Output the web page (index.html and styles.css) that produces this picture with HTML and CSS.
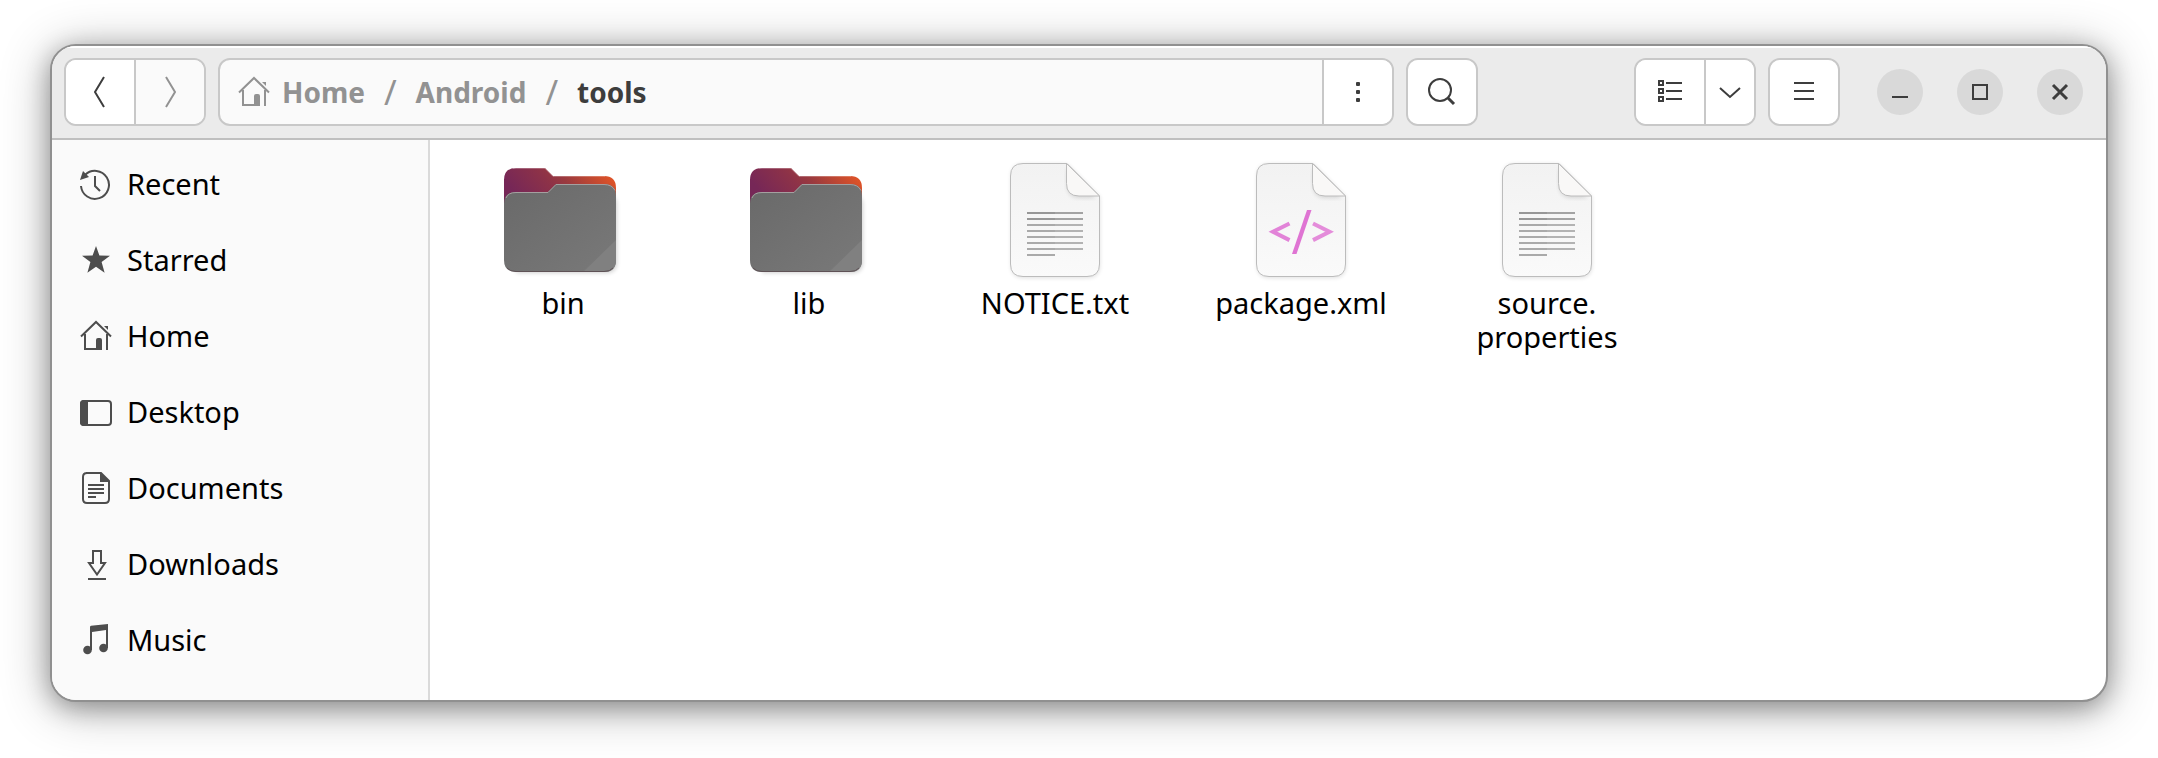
FILE: index.html
```html
<!DOCTYPE html>
<html lang="en">
<head>
<meta charset="utf-8">
<title>tools</title>
<link rel="stylesheet" href="styles.css">
</head>
<body>
<svg class="defs" width="0" height="0" aria-hidden="true">
  <defs>
    <linearGradient id="folder-back" x1="0" y1="0.3" x2="1" y2="0">
      <stop offset="0" stop-color="#762757"/>
      <stop offset="0.35" stop-color="#8d3248"/>
      <stop offset="0.5" stop-color="#9a3a3f"/>
      <stop offset="1" stop-color="#f05a22"/>
    </linearGradient>
    <linearGradient id="folder-front" x1="0" y1="0" x2="1" y2="1">
      <stop offset="0" stop-color="#696969"/>
      <stop offset="1" stop-color="#797979"/>
    </linearGradient>
    <linearGradient id="paper" x1="0" y1="0" x2="0" y2="1">
      <stop offset="0" stop-color="#f2f2f2"/>
      <stop offset="1" stop-color="#fafafa"/>
    </linearGradient>
    <filter id="soft" x="-10%" y="-10%" width="120%" height="120%">
      <feGaussianBlur stdDeviation="2"/>
    </filter>
    <symbol id="home" viewBox="0 0 32 32">
      <path d="M1 16.5 16 2l15 14.5M5 14v15h12M27 14v16" fill="none" stroke="currentColor" stroke-width="2"/>
      <path d="M16 30V20q0-2 2-2h2q2 0 2 2v10zM24 6h4v4z" fill="currentColor"/>
    </symbol>
    <symbol id="folder" viewBox="0 0 128 128">
      <path d="M17 36h90q11 0 11 12v56q0 11-11 11H17z" fill="#000" opacity="0.18" filter="url(#soft)"/>
      <path d="M5 50V22Q5 10 17 10h29l8 8h51q12 0 12 12v20z" fill="url(#folder-back)"/>
      <path d="M5 46q0-12 12-12h32l8-8h48q12 0 12 12v64q0 12-12 12H17Q5 114 5 102z" fill="url(#folder-front)"/>
      <path d="M84 114 117 82v20q0 12-12 12z" fill="#808080"/>
      <path d="M7 40q2-5.500 10-5.500h32l8-8h48q8 0 11 6" fill="none" stroke="#a4a0a0"/>
      <path d="M14 10.500h32l8 8h52" fill="none" stroke="#fff" opacity="0.250"/>
      <path d="M8 110q3 3.500 9 3.500h88q6 0 9-3.500" fill="none" stroke="#5f5256"/>
    </symbol>
    <symbol id="sheet" viewBox="0 0 128 128">
      <path d="M17 19Q17 6 29 6h44l33 33v68q0 13-13 13H30q-13 0-13-13z" fill="#000" opacity="0.12" filter="url(#soft)"/>
      <path d="M16.500 18q0-12.500 12.500-12.500h44l32.500 32.500v68q0 12.500-12.500 12.500H29q-12.500 0-12.500-12.500z" fill="url(#paper)" stroke="#bcbcbc"/>
      <path d="M73 10v16q0 14 13 14h16z" fill="#000" opacity="0.120" filter="url(#soft)"/>
      <path d="M72.500 5.500v20q0 12.500 12.500 12.500h20.500z" fill="#f9f8f7" stroke="#bcbcbc"/>
    </symbol>
    <symbol id="text-file" viewBox="-3 0 128 128">
      <use href="#sheet" width="128" height="128"/>
      <path d="M33 55h28M33 61h28" stroke="#979797" stroke-width="2"/>
      <path d="M61 55h28M61 61h28" stroke="#a3a3a3" stroke-width="2"/>
      <path d="M33 67h28M33 73h28M33 79h28M33 85h28M33 91h28M33 97h28" stroke="#aaa" stroke-width="2"/>
      <path d="M61 67h28M61 73h28M61 79h28M61 85h28M61 91h28" stroke="#b3b3b3" stroke-width="2"/>
    </symbol>
  </defs>
</svg>

<main class="window">
  <header class="headerbar">
    <div class="group">
      <button class="tool" type="button" aria-label="Back"><svg class="icon" viewBox="0 0 32 32"><path class="line" d="M20 1 11 16l9 15"/></svg></button>
      <button class="tool tool--disabled" type="button" aria-label="Forward" disabled><svg class="icon" viewBox="0 0 32 32"><path class="line" d="m12 1 9 15-9 15"/></svg></button>
    </div>
    <div class="group group--path">
      <nav class="path" aria-label="Location">
        <a class="crumb" href="#home"><svg class="icon"><use href="#home"/></svg>Home</a>
        <span class="slash">/</span>
        <a class="crumb" href="#android">Android</a>
        <span class="slash">/</span>
        <a class="crumb crumb--current" href="#tools" aria-current="page">tools</a>
      </nav>
      <button class="tool" type="button" aria-label="Folder menu"><svg class="icon" viewBox="0 0 32 32"><path d="M14 7q0-1 1-1h2q1 0 1 1v2q0 1-1 1h-2q-1 0-1-1zm0 8q0-1 1-1h2q1 0 1 1v2q0 1-1 1h-2q-1 0-1-1zm0 8q0-1 1-1h2q1 0 1 1v2q0 1-1 1h-2q-1 0-1-1z" fill="currentColor"/></svg></button>
    </div>
    <div class="group group--search">
      <button class="tool" type="button" aria-label="Search"><svg class="icon" viewBox="0 0 32 32"><circle class="line" cx="14" cy="14" r="11"/><path class="line line--bold" d="m22 22 6 6"/></svg></button>
    </div>
    <div class="group">
      <button class="tool" type="button" aria-label="List view"><svg class="icon" viewBox="0 0 32 32"><path class="line" d="M5 5h4v4H5zM5 13h4v4H5zM5 21h4v4H5zM12 7h16M12 15h16M12 23h16"/></svg></button>
      <button class="tool tool--narrow" type="button" aria-label="View options"><svg class="icon" viewBox="0 0 32 32"><path class="line" d="m6 12 10 9 10-9"/></svg></button>
    </div>
    <div class="group">
      <button class="tool" type="button" aria-label="Main menu"><svg class="icon" viewBox="0 0 32 32"><path class="line" d="M6 7h20M6 15h20M6 23h20"/></svg></button>
    </div>
    <div class="controls">
      <button class="control" type="button" aria-label="Minimize"><svg class="icon" viewBox="0 0 32 32"><path class="line" d="M8 21h16"/></svg></button>
      <button class="control" type="button" aria-label="Maximize"><svg class="icon" viewBox="0 0 32 32"><path class="line" d="M9 9h14v14H9z"/></svg></button>
      <button class="control" type="button" aria-label="Close"><svg class="icon" viewBox="0 0 32 32"><path class="line line--bold" d="m9 9 14 14M23 9 9 23"/></svg></button>
    </div>
  </header>

  <div class="body">
    <nav class="sidebar" aria-label="Places">
      <a class="place" href="#recent"><svg class="icon" viewBox="0 0 32 32"><path class="line" d="M1 18A14 14 0 1 0 5 7"/><path d="m3 3-3 9 9-3z" fill="currentColor"/><path class="line" d="M15 8v10l5 5"/></svg>Recent</a>
      <a class="place" href="#starred"><svg class="icon" viewBox="0 0 32 32"><path d="m16 2 3.400 9.400 10.600.3-8.400 6.400 3 10.600-8.600-6-8.600 6 3-10.600L2 11.700l10.600-.3z" fill="currentColor"/></svg>Starred</a>
      <a class="place" href="#home"><svg class="icon"><use href="#home"/></svg>Home</a>
      <a class="place" href="#desktop"><svg class="icon" viewBox="0 0 32 32"><rect class="line" x="1" y="5" width="30" height="24" rx="3"/><path d="M8 4v26H4q-4 0-4-4V8q0-4 4-4z" fill="currentColor"/></svg>Desktop</a>
      <a class="place" href="#documents"><svg class="icon" viewBox="0 0 32 32"><path class="line" d="M6 1h15l8 8v18q0 4-4 4H7q-4 0-4-4V5q0-4 4-4M8 13h16M8 17h16M8 21h16M8 25h8"/><path d="M20 0v10h10z" fill="currentColor"/></svg>Documents</a>
      <a class="place" href="#downloads"><svg class="icon" viewBox="0 0 32 32"><path class="line" d="M13 3h8v12h4l-8 11.500L9 15h4zM8 31h18"/></svg>Downloads</a>
      <a class="place" href="#music"><svg class="icon" viewBox="0 0 32 32"><path d="M10 3q0-1 1-1.200L28 0v24h-2V6L12 8v18h-2z" fill="currentColor"/><circle cx="7.500" cy="26" r="4.300" fill="currentColor"/><circle cx="23.500" cy="24" r="4.300" fill="currentColor"/></svg>Music</a>
    </nav>
    <section class="files" aria-label="Files">
      <a class="file" href="#bin"><svg class="file-icon"><use href="#folder"/></svg><span class="file-name">bin</span></a>
      <a class="file" href="#lib"><svg class="file-icon"><use href="#folder"/></svg><span class="file-name">lib</span></a>
      <a class="file" href="#notice"><svg class="file-icon"><use href="#text-file"/></svg><span class="file-name">NOTICE.txt</span></a>
      <a class="file" href="#package"><svg class="file-icon" viewBox="-3 0 128 128"><use href="#sheet" width="128" height="128"/><path d="M49.500 65.500 33 73.800l16.500 8.300" fill="none" stroke="#e283d8" stroke-width="4"/><path d="m73 65.500 16.500 8.300L73 82.100" fill="none" stroke="#e48cda" stroke-width="4"/><path d="M67 52h4.500l-15 44H52z" fill="#df74d3"/></svg><span class="file-name">package.xml</span></a>
      <a class="file" href="#source"><svg class="file-icon"><use href="#text-file"/></svg><span class="file-name">source.<wbr>properties</span></a>
    </section>
  </div>
</main>
</body>
</html>
```
FILE: styles.css
```css
* {
  box-sizing: border-box;
}

body {
  display: flex;
  min-height: 100vh;
  margin: 0;
  padding: 44px 50px 56px;
  background: #fff;
  color: #000;
  font: 29px/34px "Noto Sans", sans-serif;
}

a {
  color: inherit;
  text-decoration: none;
}

button {
  margin: 0;
  padding: 0;
  border: 0;
  color: inherit;
  font: inherit;
}

.defs {
  position: absolute;
}

.window {
  display: flex;
  flex: 1;
  flex-direction: column;
  overflow: hidden;
  border: 2px solid #909090;
  border-radius: 26px;
  background: #fff;
  background-clip: padding-box;
  box-shadow: 0 6px 24px rgba(0, 0, 0, 0.3), 0 6px 50px rgba(0, 0, 0, 0.3);
}

.headerbar {
  display: flex;
  align-items: center;
  gap: 12px;
  padding: 12px 23px 12px 12px;
  border-bottom: 2px solid #bfbfbf;
  background: #ebebeb;
  box-shadow: inset 0 2px #fff;
  color: #3d3d3d;
}

.group {
  display: flex;
  flex: none;
  overflow: hidden;
  border: 2px solid #c8c8c8;
  border-radius: 12px;
  background: #fff;
}

.group--path {
  flex: 1;
  background: #fafafa;
}

.group--search {
  margin-right: 144px;
}

.tool {
  display: grid;
  place-items: center;
  width: 68px;
  height: 64px;
  background: #fff;
}

.tool + .tool,
.path + .tool {
  box-sizing: content-box;
  border-left: 2px solid #c8c8c8;
}

.tool--narrow {
  width: 48px;
}

.tool--disabled {
  background: #fafafa;
  color: #929292;
}

.path {
  display: flex;
  flex: 1;
  align-items: center;
  gap: 19px;
  padding-left: 18px;
  color: #929292;
}

.crumb {
  display: flex;
  align-items: center;
  gap: 12px;
  font-size: 28px;
  font-weight: 700;
}

.crumb--current {
  color: #3d3d3d;
}

.slash {
  font-size: 34px;
}

.icon {
  flex: none;
  width: 32px;
  height: 32px;
}

.line {
  fill: none;
  stroke: currentColor;
  stroke-width: 2;
}

.line--bold {
  stroke-width: 3;
}

.controls {
  display: flex;
  gap: 34px;
  margin-left: 25px;
}

.control {
  display: grid;
  place-items: center;
  width: 46px;
  height: 46px;
  border-radius: 50%;
  background: #d9d9d9;
}

.body {
  display: flex;
  flex: 1;
}

.sidebar {
  flex: none;
  width: 378px;
  padding: 6px 0;
  border-right: 2px solid #dadada;
  background: #fafafa;
}

.place {
  display: flex;
  align-items: center;
  gap: 15px;
  height: 76px;
  padding: 0 28px;
}

.place .icon {
  color: #4d4d4d;
}

.files {
  display: flex;
  flex: 1;
  flex-wrap: wrap;
  align-content: flex-start;
  padding: 18px 10px;
}

.file {
  display: flex;
  flex-direction: column;
  align-items: center;
  width: 246px;
}

.file-icon {
  width: 128px;
  height: 128px;
}

.file-name {
  max-width: 200px;
  text-align: center;
}
```
